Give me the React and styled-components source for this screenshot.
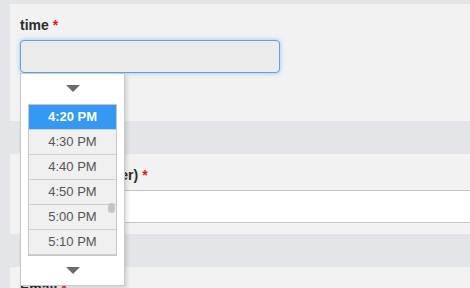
import React from "react";
import styled, { createGlobalStyle } from "styled-components";

const Global = createGlobalStyle`
  html, body { margin: 0; padding: 0; background: #e4e5e8; overflow: hidden; }
  body { font-family: "Liberation Sans", Arial, Helvetica, sans-serif; }
`;

const Page = styled.div`
  padding: 4px 0 0 10px;
  display: flex;
  flex-direction: column;
  gap: 33px;
  height: 288px;
  box-sizing: border-box;
  overflow: hidden;
`;

const Panel = styled.section`
  background: #f2f2f2;
  padding: 12px 0 ${(p) => p.$pb}px 10px;
  position: relative;
  flex-shrink: 0;
`;

const Label = styled.label`
  display: block;
  font-size: 14px;
  line-height: 18px;
  font-weight: bold;
  color: #2b2b2b;
  margin-bottom: 6px;
`;

const Req = styled.span`
  color: #e8141a;
  margin-left: 4px;
`;

const TimeInput = styled.div`
  box-sizing: border-box;
  width: 260px;
  height: 33px;
  background: #ebebeb;
  border: 1px solid #5ea2e6;
  border-radius: 4px;
  box-shadow: 0 0 4px rgba(80, 155, 235, 0.55);
`;

const TextInput = styled.div`
  box-sizing: border-box;
  width: 100%;
  height: 33px;
  background: #fff;
  border-top: 1px solid #c6c6c6;
  border-bottom: 1px solid #c6c6c6;
`;

const Dropdown = styled.div`
  position: absolute;
  left: 10px;
  top: 69px;
  box-sizing: border-box;
  width: 105px;
  height: 213px;
  background: #fff;
  border: 1px solid #c9c9c9;
  box-shadow: 2px 2px 4px rgba(0, 0, 0, 0.14);
  display: flex;
  flex-direction: column;
  align-items: center;
  padding: 0 7px;
  z-index: 5;
`;

const ArrowRow = styled.div`
  height: ${(p) => p.$h}px;
  width: 100%;
  display: flex;
  align-items: center;
  justify-content: center;
`;

const Arrow = styled.div`
  width: 0;
  height: 0;
  border-left: 7px solid transparent;
  border-right: 7px solid transparent;
  border-top: 7px solid #6b6b6b;
`;

const List = styled.ul`
  list-style: none;
  margin: 0;
  padding: 0;
  width: 100%;
  box-sizing: border-box;
  border: 1px solid #c6c6c6;
  position: relative;
  background: #f0f0f0;
`;

const Item = styled.li`
  height: 24px;
  display: flex;
  align-items: center;
  justify-content: center;
  font-size: 13px;
  color: ${(p) => (p.$sel ? "#fff" : "#555")};
  font-weight: ${(p) => (p.$sel ? "bold" : "normal")};
  background: ${(p) => (p.$sel ? "#3399f3" : "#f0f0f0")};
  border-bottom: 1px solid #cfcfcf;
  &:last-child { border-bottom: none; }
`;

const Thumb = styled.div`
  position: absolute;
  right: 1px;
  top: 98px;
  width: 7px;
  height: 10px;
  border-radius: 4px;
  background: #c4c4c4;
`;

const times = ["4:20 PM", "4:30 PM", "4:40 PM", "4:50 PM", "5:00 PM", "5:10 PM"];

export default function App() {
  return (
    <>
      <Global />
      <Page>
        <Panel $pb={48}>
          <Label>
            time<Req>*</Req>
          </Label>
          <TimeInput />
          <Dropdown>
            <ArrowRow $h={31}>
              <Arrow />
            </ArrowRow>
            <List>
              {times.map((t, i) => (
                <Item key={t} $sel={i === 0}>
                  {t}
                </Item>
              ))}
              <Thumb />
            </List>
            <ArrowRow $h={30}>
              <Arrow />
            </ArrowRow>
          </Dropdown>
        </Panel>
        <Panel $pb={11}>
          <Label>
            Contact (Number)<Req>*</Req>
          </Label>
          <TextInput />
        </Panel>
        <Panel $pb={11}>
          <Label>
            Email<Req>*</Req>
          </Label>
          <TextInput />
        </Panel>
      </Page>
    </>
  );
}
